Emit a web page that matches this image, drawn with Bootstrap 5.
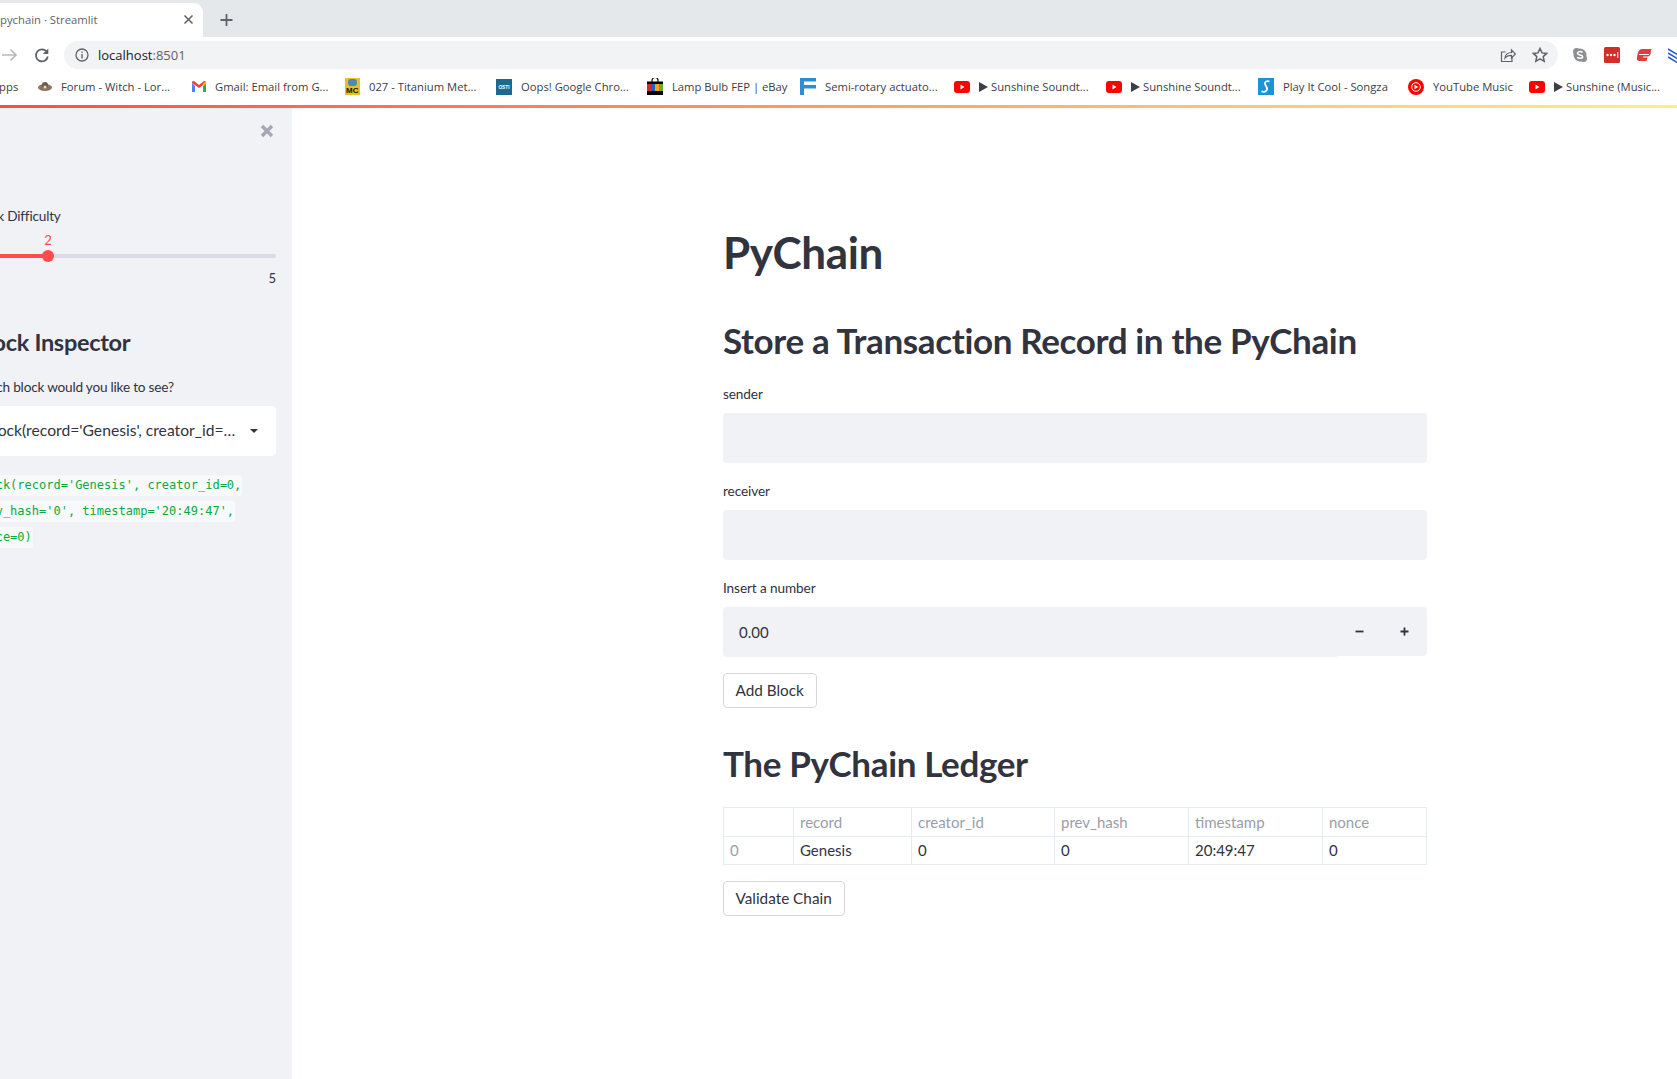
<!DOCTYPE html>
<html lang="en">
<head>
  <meta charset="UTF-8" />
  <meta name="viewport" content="width=device-width, initial-scale=1.0"/>
  <title>PyChain</title>
  <link href="https://cdn.jsdelivr.net/npm/bootstrap@5.3.3/dist/css/bootstrap.min.css" rel="stylesheet" />
  <style>
    html, body { height: 100%; overflow: hidden; }
    body { font-family: Lato, "Liberation Sans", sans-serif; color: #31333f; background: #fff; }

    /* browser chrome */
    .tabstrip { height: 37px; background: #e5e8eb; }
    .tab-active { width: 204px; height: 37px; margin-top: 3px; background: #fff; border-radius: 0 9px 0 0; padding: 0 9px 4px 0; font: 11.3px "Open Sans", sans-serif; color: #5f6368; margin-left: -1px; }
    .tab-title { padding-left: 1px; }
    .tab-plus { margin-left: 17px; margin-top: 3px; }
    .toolbar { height: 33px; padding-top: 4px; background: #fff; }
    .nav-ico { width: 24px; }
    .nav-reload { margin-left: 6px; }
    .addr-bar { flex: 0 0 1494px; height: 28px; margin-left: 10px; background: #f1f3f4; border-radius: 14px; font: 13px "Open Sans", sans-serif; color: #202124; padding-left: 11px; padding-right: 10px; }
    .addr-host { margin-left: 9px; }
    .addr-port { color: #5f6368; }
    .addr-tools { gap: 16px; }
    .ext-ico { flex: 0 0 auto; margin-left: 14px; gap: 16px; }
    .ext-ico svg { flex: 0 0 auto; }
    .bm-bar { display: grid; grid-template-columns: 38px 154px 153px 151px 151px 153px 154px 152px 152px 150px 121px 160px; height: 35px; padding-bottom: 2px; align-items: center; font: 11.25px "Open Sans", sans-serif; color: #3c4043; white-space: nowrap; }
    .bm-item { display: flex; align-items: center; gap: 9px; }
    .bm-apps { margin-left: -8px; }
    .bm-play { width: 0; height: 0; border-left: 9px solid #3c4043; border-top: 5px solid transparent; border-bottom: 5px solid transparent; margin-right: -6px; }
    .deco-line { height: 3px; background: linear-gradient(90deg, #ff4b4b, #fdf07f); }

    /* app */
    .app-shell { height: calc(100% - 108px); margin-left: -44px; }
    .side-panel { flex: 0 0 336px; background: #f0f2f6; padding: 16px 16px 0; }
    .close-ico { margin-right: 2px; height: 14px; }
    .side-label { font-size: 13.6px; line-height: 20px; letter-spacing: -.2px; }
    .side-label-first { margin-top: 68px; }
    .slider-wrap { position: relative; height: 40px; }
    .slider-track { position: absolute; left: 0; right: 0; top: 28px; height: 4px; background: #d9dce6; border-radius: 2px; }
    .slider-fill { height: 4px; background: #ff4b4b; border-radius: 2px; }
    .slider-thumb { position: absolute; left: 25%; top: -4px; width: 12px; height: 12px; margin-left: -6px; background: #ff4b4b; border-radius: 50%; }
    .slider-val { position: absolute; left: 25%; top: 6px; transform: translateX(-50%); font-size: 13px; line-height: 16px; color: #ff4b4b; }
    .slider-max { font-size: 13px; line-height: 16px; text-align: right; margin-top: 4px; }
    .side-h { font-size: 23.5px; font-weight: 700; line-height: 32px; margin: 40px 0 0; letter-spacing: -.3px; }
    .side-label-pick { margin-top: 19px; }
    .pick-box { height: 50px; margin-top: 9px; background: #fff; border-radius: 4px; padding: 0 18px 0 12px; font-size: 15.7px; }
    .caret-down { width: 0; height: 0; border-left: 4px solid transparent; border-right: 4px solid transparent; border-top: 4px solid #31333f; }
    .code-lines { margin: 16px 0 0 1px; font: 12px/26px "DejaVu Sans Mono", monospace; color: #09ab3b; }
    .code-lines code { font: inherit; color: inherit; background: #f8f9fb; padding: 3px 1px 4px; border-radius: 3px; }

    .main-pane { flex: 1; padding: 116px 0 0 431px; background: #fff; }
    .main-col { width: 704px; }
    .app-h1 { font-size: 44px; line-height: 56px; font-weight: 700; margin: 0; letter-spacing: -.4px; }
    .app-h2 { font-size: 35px; line-height: 46px; font-weight: 700; margin: 37px 0 0; letter-spacing: -.36px; }
    .app-h2-ledger { margin-top: 32px; }
    .fld-label { display: block; font-size: 13.6px; line-height: 20px; margin: 18px 0 9px; letter-spacing: -.1px; }
    .fld-label-first { margin-top: 21px; }
    .fld-input.form-control { height: 50px; background: #f0f2f6; border: 0; border-radius: 4px; font-size: 15px; color: #31333f; padding: 0 16px 1px; }
    .step-group { height: 50px; }
    .step-group .form-control { flex: 0 0 614px; height: 50px; }
    .step-btn.btn { flex: 1; height: 49px; background: #f0f2f6; border: 0; border-radius: 0; padding: 0; display: flex; align-items: center; justify-content: center; }
    .step-btn-last.btn { border-radius: 0 4px 4px 0; }
    .act-btn.btn { display: block; height: 35px; padding: 0 12px 0 11.5px; background: #fff; border: 1px solid #d6d8df; border-radius: 4px; font-size: 15.3px; color: #31333f; }
    .act-add { margin-top: 16px; }
    .act-validate { margin-top: 16px; }
    .ledger.table { width: 703px; margin: 21px 0 0; font-size: 15px; color: #31333f; table-layout: fixed; }
    .ledger.table > * > * > * { height: 28.5px; padding: 0 6px; line-height: 27px; border: 1px solid #e6eaf1; font-weight: 400; background: #fff; box-shadow: none; color: inherit; }
    .ledger.table th, .ledger.table .idx-cell { color: #9a9da8; }
    .ledger-c0 { width: 70px; } .ledger-c1 { width: 118px; } .ledger-c2 { width: 143px; }
    .ledger-c3 { width: 134px; } .ledger-c4 { width: 134px; } .ledger-c5 { width: 104px; }
  </style>
</head>
<body>

  <!-- tab strip -->
  <div class="tabstrip d-flex align-items-start">
    <div class="tab-active d-flex align-items-center justify-content-between">
      <span class="tab-title">pychain · Streamlit</span>
      <svg width="11" height="11" viewBox="0 0 11 11"><path d="M1.5 1.5l8 8M9.5 1.5l-8 8" stroke="#5f6368" stroke-width="1.6"/></svg>
    </div>
    <svg class="tab-plus" width="13" height="34" viewBox="0 0 13 34"><path d="M6.5 11v12M.5 17h12" stroke="#5f6368" stroke-width="1.8"/></svg>
  </div>

  <!-- toolbar -->
  <div class="toolbar d-flex align-items-start">
    <div class="d-flex align-items-center">
      <svg class="nav-ico" width="18" height="28" viewBox="0 0 24 28"><path d="M2 14h14M10.500 8.500l5.500 5.500-5.500 5.500" fill="none" stroke="#b7babd" stroke-width="1.700"/></svg>
      <svg class="nav-ico nav-reload" width="24" height="28" viewBox="0 0 24 28"><path d="M16.500 10.500a6 6 0 1 0 1.300 5" fill="none" stroke="#5f6368" stroke-width="1.800"/><path d="M18.300 7.500v5.500h-5.500z" fill="#5f6368"/></svg>
    </div>
    <div class="addr-bar d-flex align-items-center">
      <svg width="14" height="14" viewBox="0 0 14 14"><circle cx="7" cy="7" r="6" fill="none" stroke="#5f6368" stroke-width="1.300"/><path d="M7 6v4.500M7 3.500v1.300" stroke="#5f6368" stroke-width="1.400"/></svg>
      <span class="addr-host">localhost<span class="addr-port">:8501</span></span>
      <div class="addr-tools d-flex align-items-center ms-auto">
        <svg width="16" height="16" viewBox="0 0 16 16"><path d="M12 9.500v5H1.500V5h4" fill="none" stroke="#5f6368" stroke-width="1.200"/><path d="M5 11c.5-4 3-5.500 6.500-5.500V3l4 4-4 4V8.300C8.500 8.300 6.500 9 5 11z" fill="none" stroke="#5f6368" stroke-width="1.200"/></svg>
        <svg width="16" height="16" viewBox="0 0 16 16"><path d="M8 1.500l2 4.400 4.700.5-3.500 3.200 1 4.700L8 11.900l-4.200 2.400 1-4.700L1.300 6.400 6 5.900z" fill="none" stroke="#5f6368" stroke-width="1.500"/></svg>
      </div>
    </div>
    <div class="ext-ico d-flex align-items-center">
      <svg width="16" height="28" viewBox="0 0 16 28"><circle cx="8" cy="14" r="6.500" fill="#8d9093"/><circle cx="4.500" cy="10.500" r="3.500" fill="#8d9093"/><circle cx="11.500" cy="17.500" r="3.500" fill="#8d9093"/><path d="M10.500 11.500c-1-1.300-5-1.300-5 .8 0 2.300 5.200 1.100 5.200 3.400 0 2-4.200 2-5.500.5" fill="none" stroke="#fff" stroke-width="1.500"/></svg>
      <svg width="16" height="28" viewBox="0 0 16 28"><rect y="6" width="16" height="16" rx="1.500" fill="#d32d27"/><circle cx="3.500" cy="14" r="1.200" fill="#fff"/><circle cx="7" cy="14" r="1.200" fill="#fff"/><circle cx="10.500" cy="14" r="1.200" fill="#fff"/><path d="M13.800 11v6" stroke="#fff" stroke-width="1"/></svg>
      <svg width="16" height="28" viewBox="0 0 16 28"><path d="M6.500 8H15.500L14.500 11.500H15Q14 15.500 12 15.500H8Q7 15.500 6.500 16.500H11.500L10.500 20H4Q0 20 1 16L1.500 13.500Q2.500 8 6.500 8z" fill="#e5383f"/><path d="M3 13.500H13" stroke="#fff" stroke-width="1"/></svg>
      <svg width="12" height="28" viewBox="0 0 12 28"><path d="M0 8l10 6M0 12l10 6M0 16l10 6" stroke="#2a5bd7" stroke-width="1.600"/></svg>
    </div>
  </div>

  <!-- bookmarks -->
  <div class="bm-bar">
    <div class="bm-item"><span class="bm-apps">Apps</span></div>
    <div class="bm-item"><svg width="14" height="14" viewBox="0 0 14 14"><ellipse cx="7" cy="7.500" rx="7" ry="3.500" fill="#8a7563"/><circle cx="7" cy="5" r="3" fill="#6f5a48"/><circle cx="7" cy="7" r="1.500" fill="#e6dccf"/></svg>Forum - Witch - Lor...</div>
    <div class="bm-item"><svg width="14" height="14" viewBox="0 0 14 14"><path d="M0 3v9h3V6z" fill="#4285f4"/><path d="M14 3v9h-3V6z" fill="#34a853"/><path d="M0 3l7 5 7-5v-1.500l-2-.5-5 4L2 1 0 1.500z" fill="#ea4335"/><path d="M11 3.500L14 1.500V4l-3 2.200z" fill="#fbbc04"/></svg>Gmail: Email from G...</div>
    <div class="bm-item"><svg width="15" height="17" viewBox="0 0 15 17"><rect width="15" height="17" fill="#e9c11f"/><rect x="3" y="1" width="9" height="7" rx="3" fill="#4f86c6"/><text x="1" y="15" font-size="8" font-weight="700" font-family="Liberation Sans, sans-serif" fill="#111">MC</text></svg>027 - Titanium Met...</div>
    <div class="bm-item"><svg width="16" height="16" viewBox="0 0 16 16"><rect width="16" height="16" fill="#1d6a8e"/><text x="8" y="10" text-anchor="middle" font-size="4.800" font-weight="700" font-family="Liberation Sans, sans-serif" fill="#fff">OSTI</text></svg>Oops! Google Chro...</div>
    <div class="bm-item"><svg width="16" height="17" viewBox="0 0 16 17"><path d="M5 4V2.500a3 3 0 0 1 6 0V4" fill="none" stroke="#111" stroke-width="1.200"/><rect y="3.500" width="16" height="13.500" fill="#000"/><rect y="6" width="4" height="7" fill="#d8262f"/><rect x="4" y="6" width="4" height="7" fill="#1e63c4"/><rect x="8" y="6" width="4" height="7" fill="#f2a90b"/><rect x="12" y="6" width="4" height="7" fill="#6fa82b"/></svg>Lamp Bulb FEP | eBay</div>
    <div class="bm-item"><svg width="16" height="17" viewBox="0 0 16 17"><path d="M0 0h16v3.500H4v3.500h12v3.500H4V17H0z" fill="#2d8fd0"/></svg>Semi-rotary actuato...</div>
    <div class="bm-item"><svg width="16" height="12" viewBox="0 0 16 12"><rect width="16" height="12" rx="3" fill="#f00"/><path d="M6.500 3.500l4 2.500-4 2.500z" fill="#fff"/></svg><span class="bm-play"></span>Sunshine Soundt...</div>
    <div class="bm-item"><svg width="16" height="12" viewBox="0 0 16 12"><rect width="16" height="12" rx="3" fill="#f00"/><path d="M6.500 3.500l4 2.500-4 2.500z" fill="#fff"/></svg><span class="bm-play"></span>Sunshine Soundt...</div>
    <div class="bm-item"><svg width="16" height="17" viewBox="0 0 16 17"><rect width="16" height="17" fill="#1a94d6"/><path d="M11.500 3.500C9 2.500 6.500 3.500 7 6c.4 2 2.500 3 2 5.500-.4 2-3.200 3-5.500 1.800" fill="none" stroke="#fff" stroke-width="1.800"/></svg>Play It Cool - Songza</div>
    <div class="bm-item"><svg width="16" height="16" viewBox="0 0 16 16"><circle cx="8" cy="8" r="8" fill="#f00"/><circle cx="8" cy="8" r="4.300" fill="none" stroke="#fff" stroke-width="1"/><path d="M6.500 5.800l3.700 2.200-3.700 2.200z" fill="#fff"/></svg>YouTube Music</div>
    <div class="bm-item"><svg width="16" height="12" viewBox="0 0 16 12"><rect width="16" height="12" rx="3" fill="#f00"/><path d="M6.500 3.500l4 2.500-4 2.500z" fill="#fff"/></svg><span class="bm-play"></span>Sunshine (Music...</div>
  </div>

  <div class="deco-line"></div>

  <div class="app-shell d-flex">
    <!-- sidebar -->
    <div class="side-panel">
      <div class="d-flex justify-content-end">
        <svg class="close-ico" width="14" height="14" viewBox="0 0 14 14"><path d="M2 2l10 10M12 2L2 12" stroke="#a3a8b4" stroke-width="3.400"/></svg>
      </div>
      <div class="side-label side-label-first">Block Difficulty</div>
      <div class="slider-wrap">
        <div class="slider-val">2</div>
        <div class="slider-track">
          <div class="slider-fill" style="width: 25%"></div>
          <div class="slider-thumb"></div>
        </div>
      </div>
      <div class="slider-max">5</div>
      <h3 class="side-h">Block Inspector</h3>
      <div class="side-label side-label-pick">Which block would you like to see?</div>
      <div class="pick-box d-flex align-items-center justify-content-between">
        <span class="flex-grow-1">Block(record='Genesis', creator_id=…</span>
        <span class="caret-down"></span>
      </div>
      <div class="code-lines">
        <code>Block(record='Genesis', creator_id=0,</code><br>
        <code>prev_hash='0', timestamp='20:49:47',</code><br>
        <code>nonce=0)</code>
      </div>
    </div>

    <!-- main -->
    <div class="main-pane">
      <div class="main-col">
        <h1 class="app-h1">PyChain</h1>
        <h2 class="app-h2">Store a Transaction Record in the PyChain</h2>

        <label class="fld-label fld-label-first" for="senderInput">sender</label>
        <input id="senderInput" type="text" class="form-control fld-input" />

        <label class="fld-label" for="receiverInput">receiver</label>
        <input id="receiverInput" type="text" class="form-control fld-input" />

        <label class="fld-label" for="amountInput">Insert a number</label>
        <div class="input-group step-group align-items-start">
          <input id="amountInput" type="text" class="form-control fld-input" value="0.00" />
          <button class="btn step-btn" aria-label="minus"><svg width="9" height="9" viewBox="0 0 9 9"><path d="M.5 4.500h8" stroke="#31333f" stroke-width="1.800"/></svg></button>
          <button class="btn step-btn step-btn-last" aria-label="plus"><svg width="9" height="9" viewBox="0 0 9 9"><path d="M.5 4.500h8M4.500.5v8" stroke="#31333f" stroke-width="1.800"/></svg></button>
        </div>

        <button class="btn act-btn act-add">Add Block</button>

        <h2 class="app-h2 app-h2-ledger">The PyChain Ledger</h2>

        <table class="table ledger">
          <colgroup>
            <col class="ledger-c0"><col class="ledger-c1"><col class="ledger-c2"><col class="ledger-c3"><col class="ledger-c4"><col class="ledger-c5">
          </colgroup>
          <thead>
            <tr><th></th><th>record</th><th>creator_id</th><th>prev_hash</th><th>timestamp</th><th>nonce</th></tr>
          </thead>
          <tbody>
            <tr><td class="idx-cell">0</td><td>Genesis</td><td>0</td><td>0</td><td>20:49:47</td><td>0</td></tr>
          </tbody>
        </table>

        <button class="btn act-btn act-validate">Validate Chain</button>
      </div>
    </div>
  </div>

  <script src="https://cdn.jsdelivr.net/npm/bootstrap@5.3.3/dist/js/bootstrap.bundle.min.js"></script>
</body>
</html>
